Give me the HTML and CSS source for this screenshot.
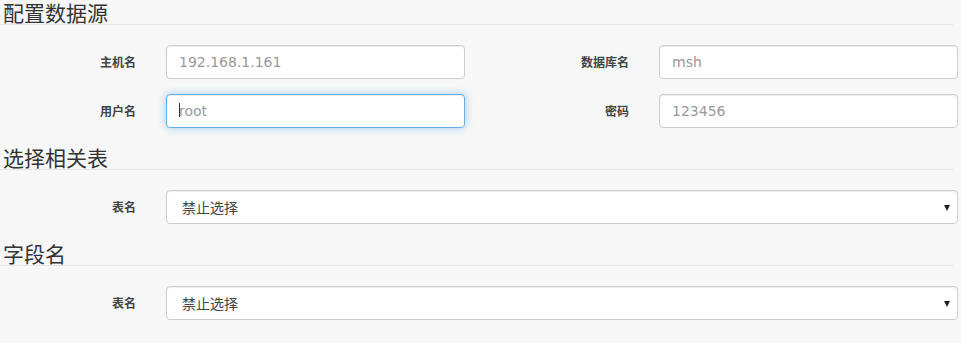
FILE: index.html
```html
<!DOCTYPE html>
<html lang="zh-CN">
<head>
<meta charset="utf-8">
<title>配置数据源</title>
<link rel="stylesheet" href="styles.css">
</head>
<body>
<div class="page">
  <h2 class="legend legend-first">配置数据源</h2>
  <div class="form-grid four">
    <label class="control-label">主机名</label>
    <input class="form-control" type="text" placeholder="192.168.1.161">
    <label class="control-label">数据库名</label>
    <input class="form-control" type="text" placeholder="msh">

    <label class="control-label">用户名</label>
    <div class="focus-wrap">
      <input class="form-control focused" type="text" placeholder="root">
      <span class="caret-line"></span>
    </div>
    <label class="control-label">密码</label>
    <input class="form-control" type="text" placeholder="123456">
  </div>

  <h2 class="legend">选择相关表</h2>
  <div class="form-grid two">
    <label class="control-label">表名</label>
    <div class="select-wrap">
      <select class="form-select">
        <option>禁止选择</option>
      </select>
    </div>
  </div>

  <h2 class="legend">字段名</h2>
  <div class="form-grid two">
    <label class="control-label">表名</label>
    <div class="select-wrap">
      <select class="form-select">
        <option>禁止选择</option>
      </select>
    </div>
  </div>
</div>
</body>
</html>
```

FILE: styles.css
```css
html, body {
  margin: 0;
  padding: 0;
  background: #f7f7f7;
}

body {
  font-family: "Noto Sans CJK SC", "DejaVu Sans", sans-serif;
  color: #333;
}

.page {
  width: 961px;
}

.legend {
  width: 950px;
  margin: 17px 0 20px 0;
  padding: 0 0 0 3px;
  font-size: 21px;
  font-weight: normal;
  line-height: 24px;
  height: 24px;
  color: #333;
  border-bottom: 1px solid #e5e5e5;
}

.legend-first {
  margin-top: 0;
}

.form-grid {
  display: grid;
  column-gap: 30px;
  row-gap: 15px;
  align-items: center;
}

.form-grid.four {
  grid-template-columns: 136px 299px 134px 299px;
}

.form-grid.two {
  grid-template-columns: 136px 792px;
}

.control-label {
  text-align: right;
  font-size: 12px;
  font-weight: bold;
  color: #444;
  line-height: 20px;
}

.form-control {
  box-sizing: border-box;
  display: block;
  width: 100%;
  height: 34px;
  margin: 0;
  padding: 6px 12px;
  font-family: "DejaVu Sans", "Noto Sans CJK SC", sans-serif;
  font-size: 14px;
  color: #555;
  background: #fff;
  border: 1px solid #ccc;
  border-radius: 4px;
  box-shadow: inset 0 1px 1px rgba(0, 0, 0, 0.075);
  outline: none;
}

.form-control::placeholder {
  color: #999;
}

.form-control.focused {
  border-color: #66afe9;
  box-shadow: inset 0 1px 1px rgba(0, 0, 0, 0.075), 0 0 8px rgba(102, 175, 233, 0.6);
}

.focus-wrap {
  position: relative;
}

.caret-line {
  position: absolute;
  left: 13px;
  top: 9px;
  width: 1px;
  height: 14px;
  background: #333;
}

.select-wrap {
  position: relative;
}

.select-wrap::after {
  content: "";
  position: absolute;
  right: 8px;
  top: 15px;
  border-left: 3.5px solid transparent;
  border-right: 3.5px solid transparent;
  border-top: 6px solid #222;
  pointer-events: none;
}

.form-select {
  box-sizing: border-box;
  display: block;
  width: 100%;
  height: 34px;
  margin: 0;
  padding: 0 24px 0 15px;
  font-family: "Noto Sans CJK SC", "DejaVu Sans", sans-serif;
  font-size: 14px;
  color: #444;
  background: #fff;
  border: 1px solid #ccc;
  border-radius: 4px;
  box-shadow: inset 0 1px 1px rgba(0, 0, 0, 0.075);
  -webkit-appearance: none;
  appearance: none;
  outline: none;
}
```
